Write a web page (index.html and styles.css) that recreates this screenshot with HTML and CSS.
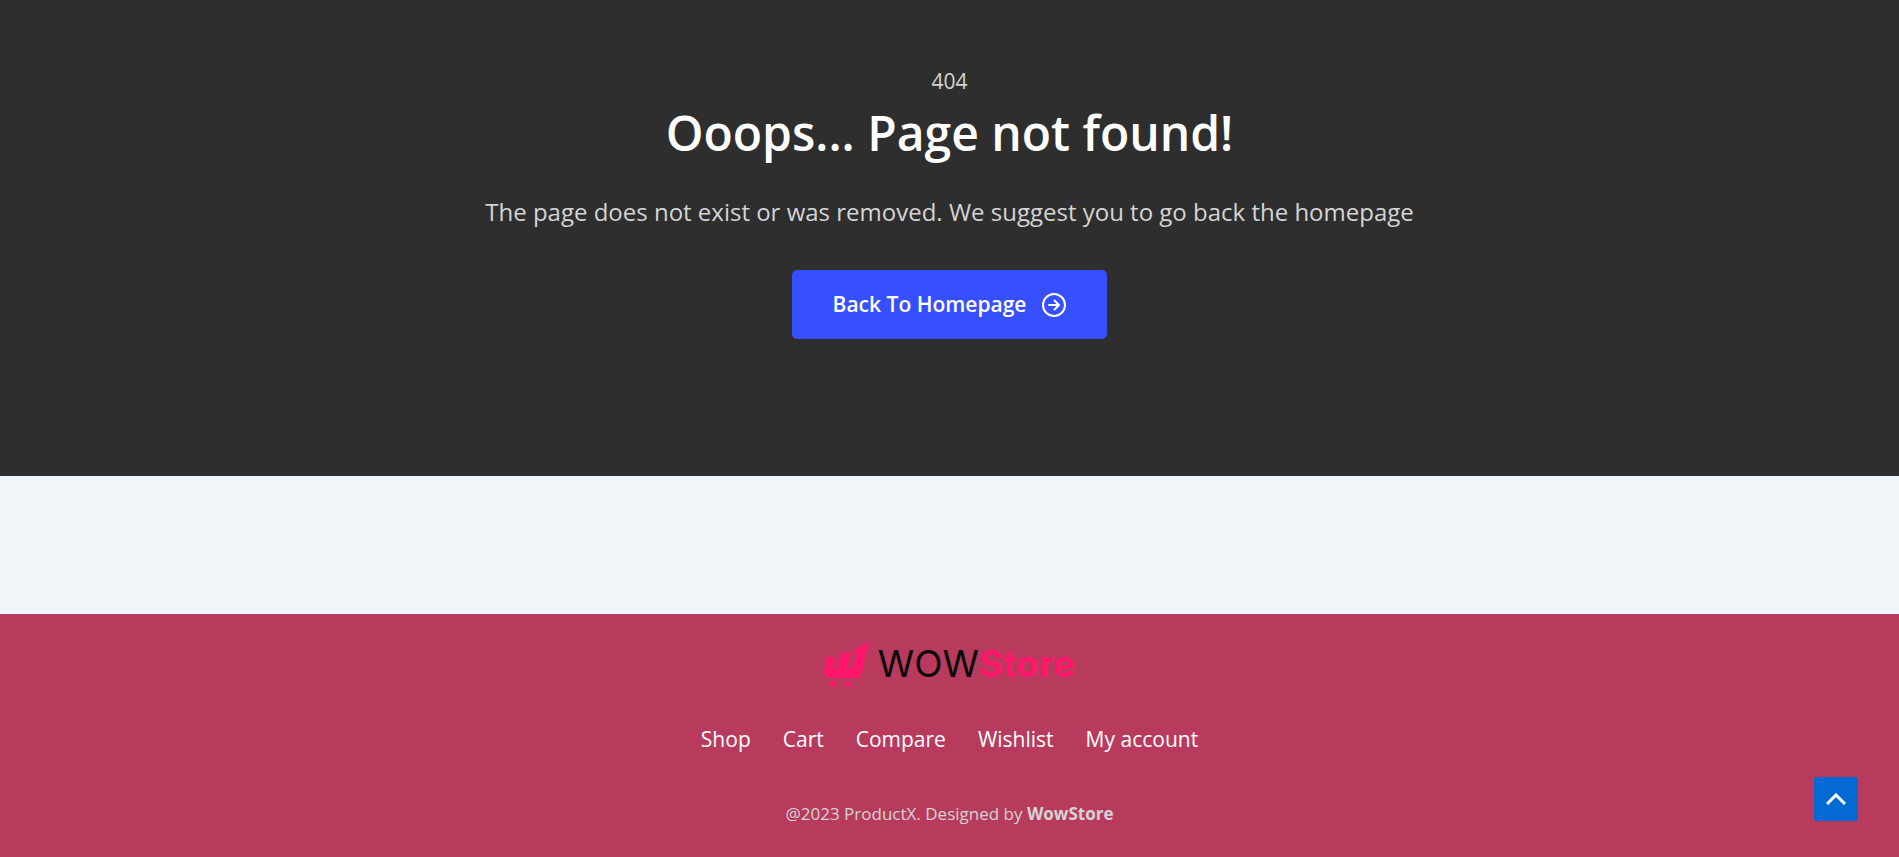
FILE: index.html
```html
<!DOCTYPE html>
<html lang="en">
<head>
    <meta charset="UTF-8">
    <meta name="viewport" content="width=device-width, initial-scale=1.0">
    <title>Page not found - WowStore</title>
    <link rel="stylesheet" href="styles.css">
</head>

<body>
    <main class="not-found">
        <p class="error-code">404</p>
        <h1>Ooops... Page not found!</h1>
        <p class="message">The page does not exist or was removed. We suggest you to go back the homepage</p>
        <a href="#" class="home-button">
            Back To Homepage
            <svg class="home-icon" viewBox="0 0 24 24" aria-hidden="true">
                <circle cx="12" cy="12" r="11" />
                <path d="M7 12h10M12.500 7.500L17 12l-4.500 4.500" />
            </svg>
        </a>
    </main>

    <footer>
        <a href="#" class="logo">
            <svg class="logo-icon" viewBox="0 0 46 46" aria-hidden="true">
                <path d="M3 15l9 2-3 10h4l3-14 11-2-3 16h4l4-15h-1V8L45 1l-7 30-3 6H4l-4-5z" />
                <circle cx="9" cy="43" r="3" />
                <circle cx="24" cy="43" r="3" />
            </svg>
            <span class="logo-text">WOW<b>Store</b></span>
        </a>
        <nav>
            <a href="#">Shop</a>
            <a href="#">Cart</a>
            <a href="#">Compare</a>
            <a href="#">Wishlist</a>
            <a href="#">My account</a>
        </nav>
        <p class="copyright">@2023 ProductX. Designed by <b>WowStore</b></p>
    </footer>

    <button type="button" class="scroll-top" aria-label="Scroll to top">
        <svg viewBox="0 0 20 12" aria-hidden="true">
            <path d="M1 11l9-9 9 9" />
        </svg>
    </button>

    <script>
        document.querySelector('.scroll-top').addEventListener('click', () => {
            window.scrollTo({ top: 0, behavior: 'smooth' });
        });
    </script>
</body>
</html>
```
FILE: styles.css
```css
body {
    margin: 0;
    min-height: 100vh;
    display: flex;
    flex-direction: column;
    background-color: #f0f5fa;
    font-family: "Segoe UI", "Open Sans", "Noto Sans", sans-serif;
    font-size: 21px;
}

h1,
p {
    margin: 0;
}

a {
    color: #fff;
    text-decoration: none;
}

.not-found {
    display: flex;
    flex-direction: column;
    align-items: center;
    padding: 64px 20px 137px;
    background-color: #2e2e2e;
    color: #d4d4d4;
    text-align: center;
}

.error-code {
    line-height: 34px;
}

h1 {
    margin-bottom: 24px;
    color: #fff;
    font-size: 48px;
    font-weight: 600;
    line-height: 70px;
}

.message {
    margin-bottom: 38px;
    font-size: 24px;
    line-height: 40px;
}

.home-button {
    display: flex;
    align-items: center;
    gap: 16px;
    padding: 18px 41px;
    border-radius: 5px;
    background-color: #364fff;
    font-weight: 600;
    line-height: 33px;
}

.home-icon {
    width: 24px;
    height: 24px;
    fill: none;
    stroke: #fff;
    stroke-width: 2;
    stroke-linecap: round;
    stroke-linejoin: round;
}

footer {
    display: flex;
    flex-direction: column;
    align-items: center;
    margin-top: auto;
    padding: 27px 20px;
    background-color: #b83b5e;
}

.logo {
    display: flex;
    align-items: center;
    gap: 8px;
    margin-bottom: 34px;
}

.logo-icon {
    width: 46px;
    height: 46px;
    fill: #ff176b;
}

.logo-text {
    color: #0a0a0a;
    font-family: Inter, sans-serif;
    font-size: 37px;
    font-weight: 400;
    line-height: 46px;
}

.logo-text b {
    color: #ff176b;
    font-weight: 700;
}

nav {
    display: flex;
    flex-wrap: wrap;
    justify-content: center;
    gap: 32px;
    margin-bottom: 41px;
    line-height: 36px;
}

.copyright {
    color: #d4d4d4;
    font-size: 17px;
    line-height: 32px;
}

.scroll-top {
    position: fixed;
    right: 41px;
    bottom: 36px;
    display: flex;
    align-items: center;
    justify-content: center;
    width: 44px;
    height: 44px;
    padding: 0;
    border: none;
    border-radius: 2px;
    background-color: #036ad4;
    cursor: pointer;
}

.scroll-top svg {
    width: 20px;
    height: 12px;
    fill: none;
    stroke: #fff;
    stroke-width: 3;
}

@media (max-width: 800px) {
    h1 {
        font-size: 36px;
        line-height: 50px;
    }
}
```
